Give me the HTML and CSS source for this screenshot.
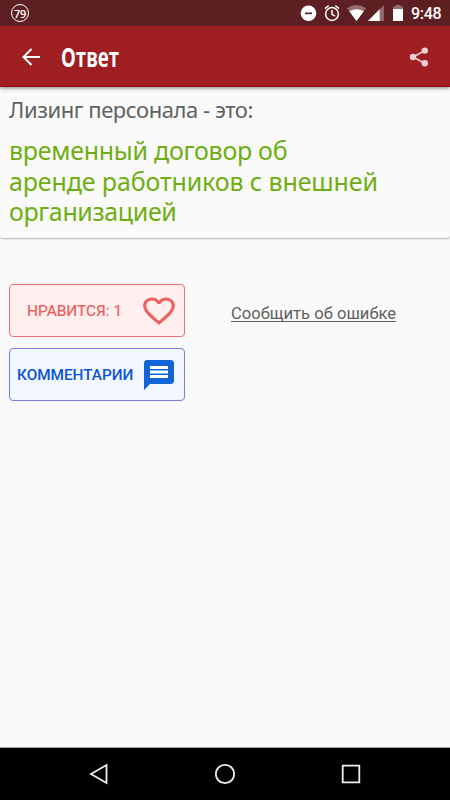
FILE: index.html
```html
<!DOCTYPE html>
<html lang="ru">
<head>
<meta charset="utf-8">
<title>Ответ</title>
<link rel="stylesheet" href="styles.css">
</head>
<body>
<div class="screen">
  <div class="status">
    <span class="level"><span class="level-num">79</span></span>
    <svg class="status-icons" width="104" height="26" viewBox="300 0 104 26" fill="#fff">
      <circle cx="308.500" cy="13.300" r="7.800"/>
      <path d="M305 12.500h7v1.700h-7z" fill="#5d1f22"/>
      <g fill="none" stroke="#fff" stroke-width="1.500">
        <circle cx="332" cy="14" r="6.400"/>
        <path d="M332 10v4.400l3 1.800M325 8.600l3.700-3.100M339 8.600l-3.700-3.100"/>
      </g>
      <path opacity=".35" d="M347 8.300Q356.500 1.500 366 8.300L356.500 21z"/>
      <path d="M349.300 11.300Q356.500 7 363.800 11.300L356.500 21z"/>
      <path opacity=".35" d="M368 21L383.800 5.300V21z"/>
      <path d="M368 21L379.700 9.300V21z"/>
      <path opacity=".35" d="M393 9V6.500h2.500V5h5v1.500h2.500V9z"/>
      <path d="M393 9h10v12h-10z"/>
    </svg>
    <span class="clock">9:48</span>
  </div>
  <header class="bar">
    <svg class="back" width="20" height="20" viewBox="0 0 20 20" fill="none" stroke="#fff" stroke-width="2"><path d="M19 10H2.500M10.500 2L2.500 10l8 8"/></svg>
    <h1 class="title">Ответ</h1>
    <svg class="share" width="20" height="22" viewBox="0 0 20 22" fill="#efcfd0" stroke="#efcfd0"><path d="M16 4.500L4 11l12 6.500" fill="none" stroke-width="1.600"/><g stroke="none"><circle cx="15.800" cy="4.600" r="3.200"/><circle cx="4" cy="11" r="3.200"/><circle cx="15.800" cy="17.300" r="3.200"/></g></svg>
  </header>
  <section class="card">
    <p class="question">Лизинг персонала - это:</p>
    <p class="answer"><span class="l1">временный договор об</span><span class="l2">аренде работников с внешней</span><span class="l3">организацией</span></p>
  </section>
  <main class="actions">
    <div class="buttons">
      <div class="btn like"><span class="like-text">НРАВИТСЯ: 1</span>
        <svg width="38" height="36" viewBox="0 0 24 24" preserveAspectRatio="none" fill="#f0605f"><path d="M16.500 3c-1.740 0-3.410.81-4.500 2.090C10.910 3.810 9.240 3 7.500 3 4.420 3 2 5.420 2 8.500c0 3.780 3.400 6.860 8.550 11.540L12 21.350l1.450-1.320C18.600 15.360 22 12.280 22 8.500 22 5.420 19.580 3 16.500 3zm-4.400 15.550l-.1.100-.1-.1C7.140 14.240 4 11.390 4 8.500 4 6.500 5.500 5 7.500 5c1.540 0 3.040.99 3.570 2.360h1.870C13.460 5.990 14.960 5 16.500 5c2 0 3.500 1.500 3.500 3.500 0 2.890-3.140 5.740-7.900 10.050z"/></svg>
      </div>
      <div class="btn comments"><span class="comments-text">КОММЕНТАРИИ</span>
        <svg width="36" height="36" viewBox="0 0 24 24" fill="#1264d8"><path d="M20 2H4c-1.100 0-2 .9-2 2v18l4-4h14c1.100 0 2-.9 2-2V4c0-1.100-.9-2-2-2z"/><path d="M6 6h12v2H6zm0 3h12v2H6zm0 3h12v2H6z" fill="#fff"/></svg>
      </div>
    </div>
    <a class="report">Сообщить об ошибке</a>
  </main>
  <nav class="nav">
    <svg width="22" height="22" viewBox="0 0 22 22"><path d="M3 11L18.500 2v18z"/></svg>
    <svg width="22" height="22" viewBox="0 0 22 22"><circle cx="11" cy="11" r="9.200"/></svg>
    <svg width="22" height="22" viewBox="0 0 22 22"><path d="M2.700 2.700h16.600v16.600H2.700z"/></svg>
  </nav>
</div>
</body>
</html>
```
FILE: styles.css
```css
* { box-sizing: border-box; }
body, p, h1 { margin: 0; }
body { background: #fafafa; font-family: Roboto, sans-serif; }
.screen { width: 450px; height: 800px; display: flex; flex-direction: column; overflow: hidden; }
.status { height: 26px; flex: none; background: #5d1f22; display: flex; align-items: center; padding-left: 11px; color: #fff; position: relative; z-index: 2; }
.level { width: 18px; height: 18px; border: 1.500px solid #fff; border-radius: 50%; display: flex; align-items: center; justify-content: center; margin-right: 271px; }
.level-num { font: 600 11px/1 "Open Sans", sans-serif; letter-spacing: -.3px; }
.clock { font-size: 16px; font-weight: 500; letter-spacing: -.3px; line-height: 26px; margin-left: 7px; padding-top: 2px; white-space: nowrap; }
.bar { height: 61px; flex: none; background: #9e1e22; border-bottom: 1px solid #960c0e; box-shadow: 0 1px 4px rgba(0,0,0,.5); display: flex; align-items: center; padding: 1px 21px 0 21px; position: relative; }
.title { margin-left: 20px; color: #fff; font: 700 27px/40px "Open Sans", sans-serif; transform: scaleX(.69); transform-origin: 0 50%; }
.share { margin-left: auto; }
.card { height: 151px; flex: none; padding: 6px 9px 0; border-radius: 0 0 3px 3px; box-shadow: 0 1px 2px rgba(0,0,0,.3); }
.question { font: 22px/32px "Noto Sans", sans-serif; letter-spacing: -.43px; color: #616161; white-space: nowrap; }
.answer { margin-top: 10px; font: 25px/30.500px "Noto Sans", sans-serif; color: #6eae13; }
.answer span { display: block; width: max-content; white-space: nowrap; }
.l1 { letter-spacing: -.27px; }
.l2 { letter-spacing: -.12px; }
.l3 { letter-spacing: -.38px; }
.actions { flex: 1; display: flex; padding: 46px 9px 0; align-items: flex-start; }
.buttons { display: flex; flex-direction: column; gap: 11px; width: 176px; }
.btn { height: 53px; border: 1px solid; border-radius: 4px; display: flex; align-items: center; font-weight: 500; white-space: nowrap; }
.btn svg { margin-left: auto; flex: none; }
.like { background: #ffefee; border-color: #f07172; color: #ef5a5a; padding: 0 6px 0 17px; font-size: 15.400px; font-weight: 400; -webkit-text-stroke: .2px #ef5a5a; }
.comments { background: #f1f6ff; border-color: #7b7ce6; color: #0b55d2; padding: 0 7px; font-size: 15.300px; }
.like-text, .comments-text { padding-top: 1px; }
.report { margin: 19px 0 0 46px; font-size: 16.600px; line-height: 22px; color: #5f5f5f; text-decoration: underline; text-underline-offset: 2px; text-decoration-thickness: 1px; text-decoration-skip-ink: none; white-space: nowrap; }
.nav { height: 53px; flex: none; background: #000; border-top: 1px solid #a0a0a0; display: flex; justify-content: space-between; padding: 15px 88px 0 88px; }
.nav svg { fill: none; stroke: #eee; stroke-width: 1.800; }
```
